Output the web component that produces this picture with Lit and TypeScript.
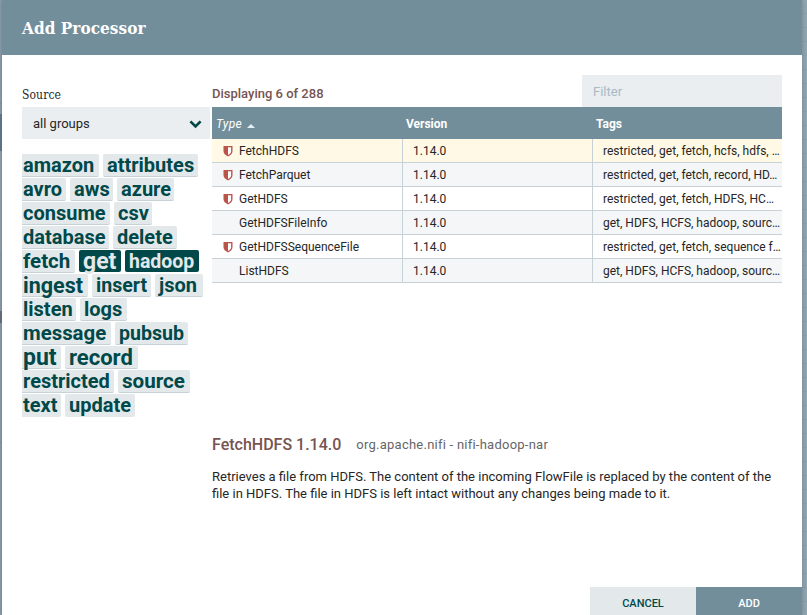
import { LitElement, html, css, svg, nothing } from "lit";
import { customElement, state } from "lit/decorators.js";
import { classMap } from "lit/directives/class-map.js";
import { styleMap } from "lit/directives/style-map.js";

interface Tag { name: string; width: number; size?: number; on?: boolean }
interface Processor { type: string; restricted: boolean; tags: string }

const TAG_ROWS: Tag[][] = [
  [{ name: "amazon", width: 77 }, { name: "attributes", width: 95 }],
  [{ name: "avro", width: 44 }, { name: "aws", width: 43 }, { name: "azure", width: 57 }],
  [{ name: "consume", width: 88 }, { name: "csv", width: 38 }],
  [{ name: "database", width: 87 }, { name: "delete", width: 64 }],
  [{ name: "fetch", width: 53, size: 20.5 }, { name: "get", width: 42, size: 23, on: true }, { name: "hadoop", width: 74, size: 19.5, on: true }],
  [{ name: "ingest", width: 66, size: 21.5 }, { name: "insert", width: 59, size: 19.6 }, { name: "json", width: 48 }],
  [{ name: "listen", width: 54 }, { name: "logs", width: 47 }],
  [{ name: "message", width: 89, size: 20.4 }, { name: "pubsub", width: 73, size: 19.6 }],
  [{ name: "put", width: 39, size: 23 }, { name: "record", width: 73, size: 22 }],
  [{ name: "restricted", width: 92 }, { name: "source", width: 72, size: 20.6 }],
  [{ name: "text", width: 39 }, { name: "update", width: 70 }],
];

const PROCESSORS: Processor[] = [
  { type: "FetchHDFS", restricted: true, tags: "restricted, get, fetch, hcfs, hdfs, …" },
  { type: "FetchParquet", restricted: true, tags: "restricted, get, fetch, record, HD…" },
  { type: "GetHDFS", restricted: true, tags: "restricted, get, fetch, HDFS, HC…" },
  { type: "GetHDFSFileInfo", restricted: false, tags: "get, HDFS, HCFS, hadoop, sourc…" },
  { type: "GetHDFSSequenceFile", restricted: true, tags: "restricted, get, fetch, sequence f…" },
  { type: "ListHDFS", restricted: false, tags: "get, HDFS, HCFS, hadoop, sourc…" },
];

@customElement("app-root")
export class AppRoot extends LitElement {
  @state() private selected = 0;

  static styles = css`
    :host {
      display: block;
      height: 615px;
      overflow: hidden;
      background: linear-gradient(
        #8b9da9 0 103px, #7a98a5 103px 104px, #8b9da9 104px 114px,
        #62798d 114px 151px, #8f9fab 151px 252px, #7f9ca8 252px 253px,
        #8b9ba9 253px 311px, #66727e 311px 323px, #8b9ba9 323px 442px,
        #7f909e 442px 443px, #8b9ba9 443px);
      font-family: Roboto, sans-serif;
      font-size: 13px;
      color: #262626;
    }
    .frame {
      display: flex;
      height: 615px;
      padding-left: 2px;
      box-sizing: border-box;
    }
    .dialog {
      position: relative;
      width: 800px;
      display: flex;
      flex-direction: column;
      background: #fff;
      box-shadow: 0 0 4px rgba(0, 0, 0, 0.2);
    }
    .canvas {
      flex: 1;
      background: repeating-linear-gradient(transparent 0 13px, rgba(90, 120, 130, 0.14) 13px 14px), #8ea4af;
    }
    .header {
      height: 55px;
      flex: none;
      display: flex;
      align-items: center;
      padding-left: 20px;
      background: #728e9b;
      color: #fff;
      font: bold 17px "Roboto Slab", "DejaVu Serif", serif;
      font-stretch: condensed;
      letter-spacing: 0.05px;
    }
    .body { display: flex; flex: 1; padding: 20px 20px 0; min-height: 0; }
    .side { width: 190px; flex: none; }
    .label {
      height: 32px;
      line-height: 41px;
      font-family: "Roboto Slab", "DejaVu Serif", serif;
      font-stretch: condensed;
      font-size: 12px;
      letter-spacing: 0.1px;
    }
    .select {
      display: flex;
      align-items: center;
      justify-content: space-between;
      width: 188px;
      height: 32px;
      box-sizing: border-box;
      padding: 0 8px 0 11px;
      background: #eaeef0;
    }
    .select svg { display: block; width: 13px; height: 9px; margin-top: 2px; }
    .cloud { margin-top: 15px; }
    .tags { display: flex; gap: 4px; height: 24px; }
    .tag {
      height: 23px;
      box-sizing: border-box;
      padding-left: 4px;
      border-bottom: 1px solid #c7d2d7;
      border-radius: 2px;
      background: #e3e8eb;
      color: #004849;
      font-weight: 700;
      font-size: 20px;
      line-height: 23px;
      white-space: nowrap;
    }
    .tag:first-child { padding-left: 1px; border-radius: 0 2px 2px 0; }
    .tag.on { height: 22px; border-bottom: 0; background: #004849; color: #e3e8eb; }
    .tags:last-child .tag { border-bottom: 0; }
    .main { flex: 1; min-width: 0; }
    .top { display: flex; justify-content: space-between; height: 32px; }
    .count { line-height: 38px; font-weight: 500; color: #775351; }
    .filter {
      width: 200px;
      box-sizing: border-box;
      padding-left: 11px;
      line-height: 33px;
      background: #eaeef0;
      color: #a8bac3;
    }
    .row { display: grid; grid-template-columns: 191px 190px 189px; height: 24px; }
    .head {
      height: 32px;
      line-height: 34px;
      background: #728e9b;
      color: #fff;
      font-size: 12px;
      font-weight: 700;
    }
    .head .cell { padding-left: 4px; }
    .head .version { padding-left: 3px; }
    .head .tagcol { padding-left: 3px; }
    .sorted { font-style: italic; font-weight: 400; letter-spacing: 0.3px; display: flex; align-items: center; gap: 5px; }
    .sorted svg { width: 8px; height: 4px; margin-top: 3px; }
    .item {
      box-sizing: border-box;
      border-bottom: 1px solid #c7d2d7;
      font-size: 12px;
      line-height: 24px;
    }
    .item:nth-child(odd) { background: #f4f6f7; }
    .item.selected { background: #fff9e5; }
    .item .cell { box-sizing: border-box; height: 23px; border-right: 1px solid #c7d2d7; }
    .item .type { display: flex; padding-left: 11px; }
    .icon { width: 16px; display: flex; align-items: center; }
    .icon svg { width: 10px; height: 12px; }
    .item .version { padding-left: 10px; }
    .item .tagcol { padding-left: 10px; border-right: 0; white-space: nowrap; }
    .table { height: 328px; }
    .title { display: flex; align-items: baseline; gap: 15px; line-height: 20px; }
    .name { font-size: 16px; font-weight: 500; color: #775351; }
    .bundle { color: #666; letter-spacing: 0.24px; position: relative; top: -1px; }
    .description { margin: 12px 0 0; line-height: 17px; }
    .buttons { display: flex; justify-content: flex-end; height: 28px; flex: none; }
    .button {
      width: 106px;
      line-height: 34px;
      text-align: center;
      font-size: 11px;
      font-weight: 500;
      background: #e3e8eb;
      color: #004849;
    }
    .button.primary { background: #728e9b; color: #fff; }
  `;

  private shield() {
    return html`<svg viewBox="0 0 10 12">
      ${svg`<path d="M.5 1h9v5c0 3-2.5 4.400-4.500 5.400C3 10.400.5 9 .5 6z" fill="#ba554a"/><path d="M5 2.300h3.100V6.200c0 1.700-1.400 2.800-3.100 3.800z" fill="#fff"/>`}
    </svg>`;
  }

  private tag(t: Tag) {
    return html`<div class=${classMap({ tag: true, on: !!t.on })}
      style=${styleMap({ width: `${t.width}px`, fontSize: `${t.size ?? 20}px` })}>${t.name}</div>`;
  }

  render() {
    return html`
      <div class="frame">
        <div class="dialog">
          <div class="header">Add Processor</div>
          <div class="body">
            <div class="side">
              <div class="label">Source</div>
              <div class="select">
                <span>all groups</span>
                <svg viewBox="0 0 13 9"><path d="M1.400 1.400 6.500 6.400 11.600 1.400" fill="none" stroke="#004849" stroke-width="2.700"/></svg>
              </div>
              <div class="cloud">
                ${TAG_ROWS.map((r) => html`<div class="tags">${r.map((t) => this.tag(t))}</div>`)}
              </div>
            </div>
            <div class="main">
              <div class="top">
                <div class="count">Displaying 6 of 288</div>
                <div class="filter">Filter</div>
              </div>
              <div class="table">
                <div class="row head">
                  <div class="cell sorted">Type<svg viewBox="0 0 8 4"><path d="M0 4 4 0 8 4z" fill="#e3f0f5"/></svg></div>
                  <div class="cell version">Version</div>
                  <div class="cell tagcol">Tags</div>
                </div>
                ${PROCESSORS.map((p, i) => html`
                  <div class=${classMap({ row: true, item: true, selected: i === this.selected })}
                    @click=${() => (this.selected = i)}>
                    <div class="cell type"><span class="icon">${p.restricted ? this.shield() : nothing}</span>${p.type}</div>
                    <div class="cell version">1.14.0</div>
                    <div class="cell tagcol">${p.tags}</div>
                  </div>`)}
              </div>
              <div class="title">
                <span class="name">${PROCESSORS[this.selected].type} 1.14.0</span>
                <span class="bundle">org.apache.nifi - nifi-hadoop-nar</span>
              </div>
              <p class="description">Retrieves a file from HDFS. The content of the incoming FlowFile is replaced by the content of the file in HDFS. The file in HDFS is left intact without any changes being made to it.</p>
            </div>
          </div>
          <div class="buttons">
            <div class="button">CANCEL</div>
            <div class="button primary">ADD</div>
          </div>
        </div>
        <div class="canvas"></div>
      </div>`;
  }
}
